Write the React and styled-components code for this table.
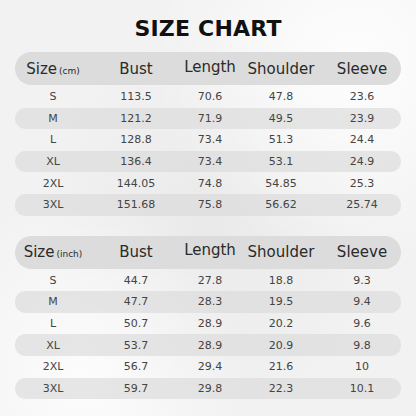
import React from 'react';
import styled, { createGlobalStyle } from 'styled-components';

const cmRows = [
  ['S', '113.5', '70.6', '47.8', '23.6'],
  ['M', '121.2', '71.9', '49.5', '23.9'],
  ['L', '128.8', '73.4', '51.3', '24.4'],
  ['XL', '136.4', '73.4', '53.1', '24.9'],
  ['2XL', '144.05', '74.8', '54.85', '25.3'],
  ['3XL', '151.68', '75.8', '56.62', '25.74'],
];

const inchRows = [
  ['S', '44.7', '27.8', '18.8', '9.3'],
  ['M', '47.7', '28.3', '19.5', '9.4'],
  ['L', '50.7', '28.9', '20.2', '9.6'],
  ['XL', '53.7', '28.9', '20.9', '9.8'],
  ['2XL', '56.7', '29.4', '21.6', '10'],
  ['3XL', '59.7', '29.8', '22.3', '10.1'],
];

function SizeTable({ unit, rows }) {
  return (
    <Table>
      <HeaderRow>
        <HeadCell>
          Size<Unit>({unit})</Unit>
        </HeadCell>
        <HeadCell>Bust</HeadCell>
        <HeadCell $raise>Length</HeadCell>
        <HeadCell>Shoulder</HeadCell>
        <HeadCell>Sleeve</HeadCell>
      </HeaderRow>
      {rows.map((r, i) => (
        <Row key={r[0]} $striped={i % 2 === 1}>
          {r.map((v, j) => (
            <Cell key={j}>{v}</Cell>
          ))}
        </Row>
      ))}
    </Table>
  );
}

export default function App() {
  return (
    <>
      <GlobalStyle />
      <Page>
        <Title>SIZE CHART</Title>
        <SizeTable unit="cm" rows={cmRows} />
        <SizeTable unit="inch" rows={inchRows} />
      </Page>
    </>
  );
}

const GlobalStyle = createGlobalStyle`
  body {
    margin: 0;
    font-family: "DejaVu Sans", "Noto Sans", sans-serif;
  }
`;

const Page = styled.div`
  width: 416px;
  height: 416px;
  box-sizing: border-box;
  padding: 15px 15px 0 15px;
  display: flex;
  flex-direction: column;
  gap: 20px;
  background:
    radial-gradient(ellipse at 85% 15%, rgba(255,255,255,0.9), rgba(255,255,255,0) 40%),
    radial-gradient(ellipse at 20% 90%, rgba(255,255,255,0.8), rgba(255,255,255,0) 35%),
    radial-gradient(ellipse at 50% 55%, rgba(228,228,228,0.6), rgba(228,228,228,0) 60%),
    #f2f2f2;
  overflow: hidden;
`;

const Title = styled.h1`
  margin: 0 0 -10px 0;
  text-align: center;
  font-size: 22px;
  line-height: 27px;
  font-weight: 800;
  color: #111;
  letter-spacing: 0.2px;
`;

const Table = styled.div`
  display: flex;
  flex-direction: column;
`;

const grid = `
  display: grid;
  grid-template-columns: 76px 90px 58px 84px 78px;
  align-items: center;
`;

const HeaderRow = styled.div`
  ${grid}
  height: 33px;
  border-radius: 17px;
  background: #dcdcdc;
  margin-bottom: 1px;
`;

const HeadCell = styled.div`
  text-align: center;
  font-size: 15px;
  color: #2a2a2a;
  white-space: nowrap;
  padding-bottom: ${(p) => (p.$raise ? '4px' : '0')};
`;

const Unit = styled.span`
  font-size: 9px;
  margin-left: 2px;
`;

const Row = styled.div`
  ${grid}
  height: 21.6px;
  border-radius: 10px;
  background: ${(p) => (p.$striped ? 'rgba(218,218,218,0.65)' : 'transparent')};
`;

const Cell = styled.div`
  text-align: center;
  font-size: 11px;
  color: #444;
`;
